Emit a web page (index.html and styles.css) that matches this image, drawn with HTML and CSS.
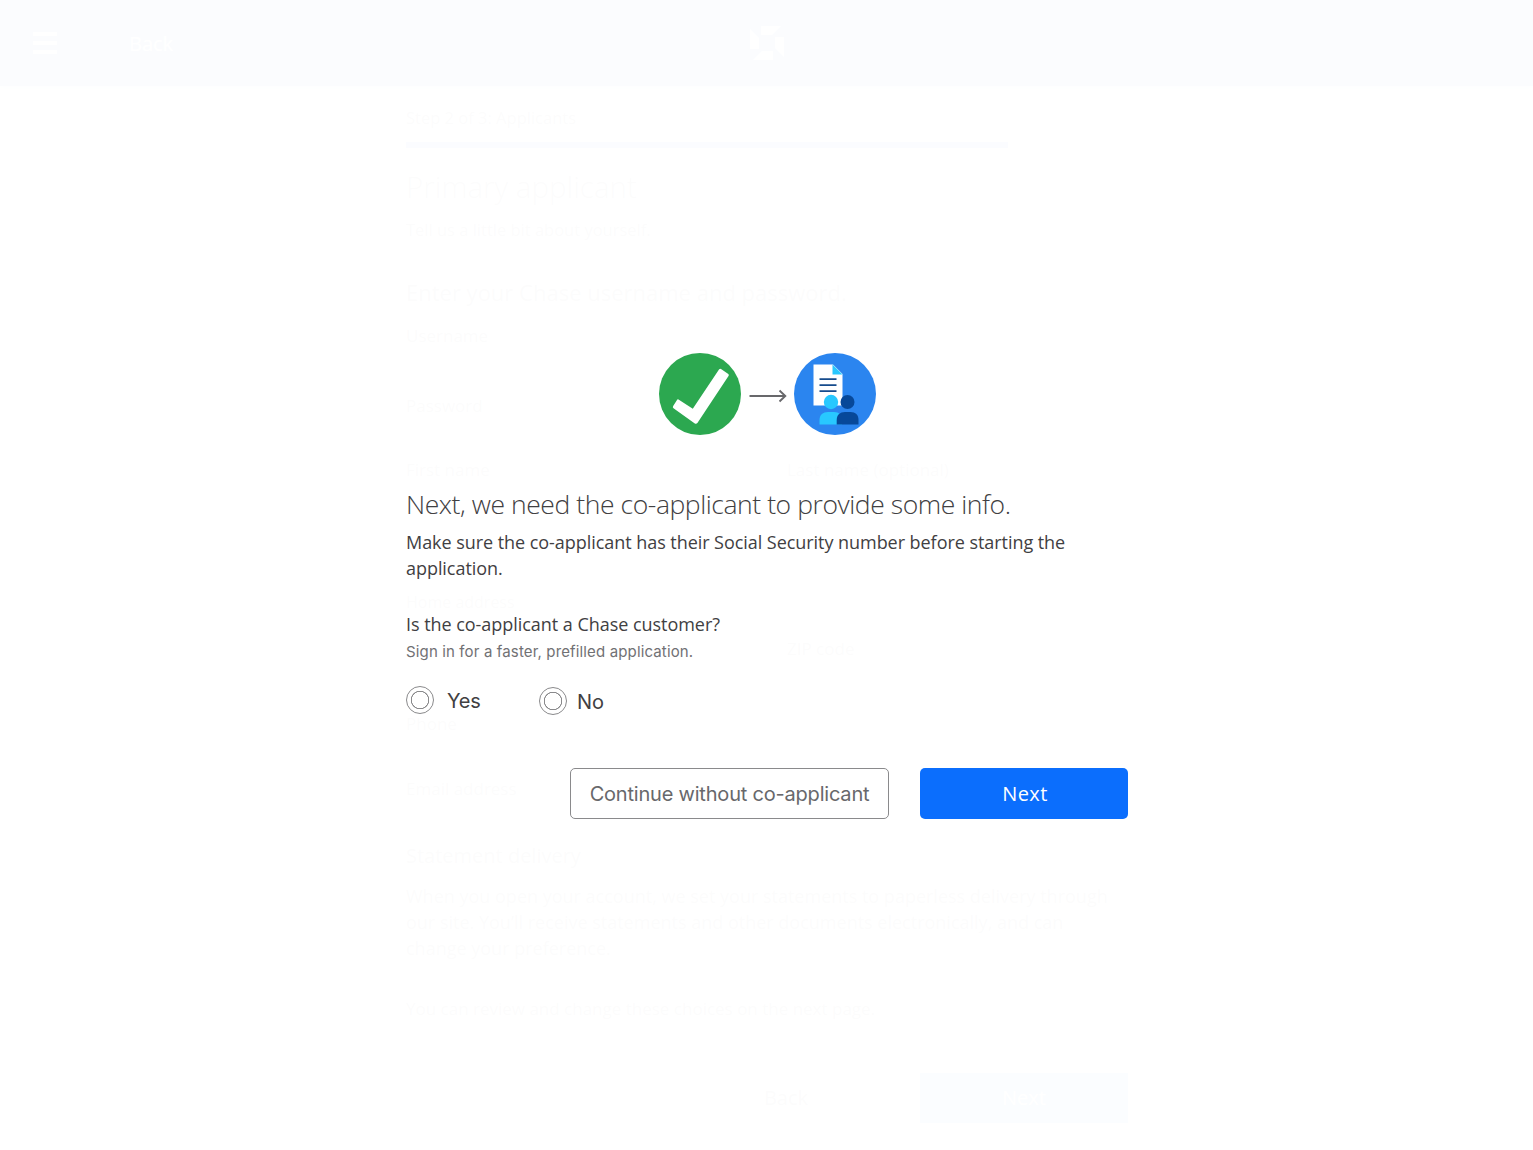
FILE: index.html
```html
<!DOCTYPE html>
<html lang="en">
<head>
    <meta charset="UTF-8">
    <meta name="viewport" content="width=device-width, initial-scale=1.0">
    <title>Co-applicant</title>
    <link rel="stylesheet" href="styles.css">
</head>
<body>
    <div class="page" aria-hidden="true">
        <header class="page-header">
            <svg class="menu-icon" width="28" height="28" viewBox="0 0 28 28">
                <path d="M2 5h24M2 14h24M2 23h24" stroke="#fff" stroke-width="4"/>
            </svg>
            <span class="page-back">Back</span>
            <svg class="page-logo" width="40" height="40" viewBox="0 0 40 40">
                <path d="M14 3h20l-9 9H14zM37 14v20l-9-9V14zM26 37H6l9-9h11zM3 26V6l9 9v11z" fill="#fff"/>
            </svg>
        </header>
        <div class="page-content">
            <p class="page-step">Step 2 of 3: Applicants</p>
            <div class="page-progress"></div>
            <h1>Primary applicant</h1>
            <p class="page-intro">Tell us a little bit about yourself.</p>
            <h2>Enter your Chase username and password.</h2>
            <p class="page-label">Username</p>
            <div class="page-row row-password"><span>Password</span></div>
            <div class="page-row row-name"><span>First name</span><span>Last name (optional)</span></div>
            <div class="page-row row-address"><span>Home address</span></div>
            <div class="page-row row-city"><span></span><span>ZIP code</span></div>
            <div class="page-row row-phone"><span>Phone</span></div>
            <div class="page-row row-email"><span>Email address</span></div>
        </div>
        <div class="page-statement">
            <h3>Statement delivery</h3>
            <p>When you open your account, we set your statements to paperless delivery through our site. You’ll receive statements and other documents electronically, and can change your preference.</p>
            <p class="page-note">You can review and change these choices on the next page.</p>
        </div>
        <div class="page-actions">
            <span class="page-cancel">Back</span>
            <span class="page-next">Next</span>
        </div>
    </div>

    <div class="overlay">
        <main class="dialog">
            <div class="progress-icons">
                <svg class="circle-icon" width="82" height="82" viewBox="0 0 82 82">
                    <circle cx="41" cy="41" r="41" fill="#2ca850"/>
                    <path d="M19.5 46.5L33.8 55.8L60 16.6Q61 15.3 62.4 16.3L69.3 21Q70.3 21.8 69.5 23.1L38.4 70Q37.3 71.4 35.8 70.4L14.5 55.3Q13.3 54.3 14.2 53L18 47Q18.6 46 19.5 46.5Z" fill="#fff"/>
                </svg>
                <svg class="arrow-icon" width="38" height="14" viewBox="0 0 38 14">
                    <path d="M.5 7H36M30.5 1.5L36.3 7L30.5 12.5" fill="none" stroke="#68686b" stroke-width="1.9"/>
                </svg>
                <svg class="circle-icon" width="82" height="82" viewBox="0 0 82 82">
                    <circle cx="41" cy="41" r="41" fill="#2b85ef"/>
                    <path d="M19.5 11.5H39L48.5 21V52.5H19.5Z" fill="#fff"/>
                    <path d="M38.5 11.5L48.5 21.5H38.5Z" fill="#28c8ff"/>
                    <path d="M25.5 26.2H42.5M25.5 32.2H42.5M25.5 38.2H42.5" stroke="#164b8c" stroke-width="1.7"/>
                    <circle cx="37" cy="49" r="7.2" fill="#28c8ff"/>
                    <circle cx="53.5" cy="49" r="7" fill="#074899"/>
                    <path d="M25.5 71.5V67C25.5 61.8 29 59 34 59H40C45 59 48 61.8 48 67V71.5Z" fill="#28c8ff"/>
                    <path d="M42.7 71.5V67C42.7 61.8 46 59 51 59H56.5C61.5 59 64.5 61.8 64.5 67V71.5Z" fill="#074899"/>
                </svg>
            </div>

            <h1 class="dialog-title">Next, we need the co-applicant to provide some info.</h1>
            <p class="dialog-text">Make sure the co-applicant has their Social Security number before starting the application.</p>

            <p class="question">Is the co-applicant a Chase customer?</p>
            <p class="hint">Sign in for a faster, prefilled application.</p>

            <div class="options">
                <label class="option"><input type="radio" name="customer" value="yes"><span>Yes</span></label>
                <label class="option option-no"><input type="radio" name="customer" value="no"><span>No</span></label>
            </div>

            <div class="actions">
                <button class="btn btn-secondary">Continue without co-applicant</button>
                <button class="btn btn-primary">Next</button>
            </div>
        </main>
    </div>
</body>
</html>
```
FILE: styles.css
```css
* {
    margin: 0;
    padding: 0;
    box-sizing: border-box;
}

body {
    height: 1150px;
    overflow: hidden;
    background: #fff;
    color: #414042;
    font-family: 'Open Sans', 'Noto Sans', sans-serif;
}

/* application form behind the overlay */
.page {
    display: flex;
    flex-direction: column;
    height: 1150px;
}

.page-header {
    display: flex;
    align-items: center;
    flex: none;
    height: 86px;
    padding-left: 31px;
    background: #005eb8;
    box-shadow: 0 2px 5px rgba(0, 94, 184, 0.5);
    color: #fff;
}

.page-back {
    width: 50px;
    margin-left: 70px;
    font-size: 20px;
}

.page-logo {
    margin-left: 568px;
}

.page-content,
.page-statement,
.page-actions {
    width: 722px;
    margin-left: 406px;
}

.page-content {
    height: 758px;
    padding-top: 21px;
}

.page-step {
    font-size: 16.5px;
    line-height: 22px;
}

.page-progress {
    width: 602px;
    height: 6px;
    margin-top: 13px;
    background: #0b5efd;
}

.page-content h1 {
    margin-top: 20px;
    font-size: 29.5px;
    font-weight: 300;
    line-height: 38px;
}

.page-intro {
    margin-top: 12px;
    font-size: 16.5px;
    line-height: 24px;
}

.page-content h2 {
    margin-top: 36px;
    font-size: 22px;
    font-weight: 400;
    line-height: 28px;
}

.page-label {
    margin-top: 18px;
    font-size: 17px;
    line-height: 24px;
}

.page-row {
    display: grid;
    grid-template-columns: 381px 1fr;
    font-size: 17px;
    line-height: 24px;
}

.row-password {
    margin-top: 46px;
}

.row-name {
    margin-top: 40px;
}

.row-address {
    margin-top: 108px;
    font-size: 16px;
}

.row-city {
    margin-top: 23px;
}

.row-phone {
    margin-top: 51px;
}

.row-email {
    margin-top: 41px;
}

.page-statement h3 {
    font-size: 20px;
    font-weight: 400;
    line-height: 24px;
}

.page-statement p {
    margin-top: 15px;
    font-size: 18px;
    line-height: 26px;
}

.page-statement .page-note {
    margin-top: 35px;
    font-size: 17px;
}

.page-actions {
    display: flex;
    justify-content: flex-end;
    gap: 30px;
    margin-top: 51px;
    font-size: 20px;
    line-height: 50px;
    text-align: center;
}

.page-cancel {
    width: 208px;
}

.page-next {
    width: 208px;
    background: #0b6efd;
    color: #fff;
}

.overlay {
    position: absolute;
    inset: 0;
    display: flex;
    justify-content: center;
    background: rgba(255, 255, 255, 0.985);
}

.dialog {
    width: 722px;
    margin-left: 1px;
    padding-top: 352px;
}

.progress-icons {
    display: flex;
    align-items: center;
    justify-content: center;
    gap: 7.5px;
    height: 83px;
    padding-left: 1px;
}

.arrow-icon {
    margin-top: 4px;
}

.dialog-title {
    margin-top: 50px;
    font-size: 26.5px;
    font-weight: 300;
    letter-spacing: -0.43px;
    line-height: 38px;
    white-space: nowrap;
}

.dialog-text {
    margin-top: 6px;
    font-size: 18px;
    letter-spacing: -0.05px;
    line-height: 26px;
}

.question {
    margin-top: 30px;
    font-size: 18px;
    letter-spacing: -0.04px;
    line-height: 26px;
}

.hint {
    margin-top: 5px;
    color: #717174;
    font-family: Inter, sans-serif;
    font-size: 15px;
    letter-spacing: 0.14px;
    line-height: 20px;
}

.options {
    display: flex;
    margin-top: 23px;
}

.option {
    display: flex;
    align-items: center;
    width: 133px;
    height: 30px;
    font-family: Inter, sans-serif;
    font-size: 20px;
    letter-spacing: -0.2px;
}

.option span {
    padding-top: 2px;
}

.option input {
    appearance: none;
    width: 28px;
    height: 28px;
    margin-right: 13px;
    border: 1px solid #8a8a8c;
    border-radius: 50%;
    background: radial-gradient(circle, transparent 8px, #8a8a8c 8.4px, #8a8a8c 9px, transparent 9.5px);
}

.option-no {
    padding-top: 1px;
    letter-spacing: 0;
}

.option-no input {
    margin-right: 10px;
}

.actions {
    display: flex;
    justify-content: flex-end;
    gap: 31px;
    margin-top: 53px;
}

.btn {
    height: 51px;
    border-radius: 5px;
    font-size: 20px;
    white-space: nowrap;
    cursor: pointer;
}

.btn-secondary {
    width: 319px;
    border: 1px solid #8a8a8c;
    background: #fff;
    color: #68686b;
    font-family: Inter, sans-serif;
    letter-spacing: -0.2px;
}

.btn-primary {
    width: 208px;
    padding-left: 2px;
    border: none;
    background: #0b6efd;
    color: #fff;
    font-family: 'Open Sans', sans-serif;
    font-weight: 500;
    letter-spacing: 0.4px;
}
```
